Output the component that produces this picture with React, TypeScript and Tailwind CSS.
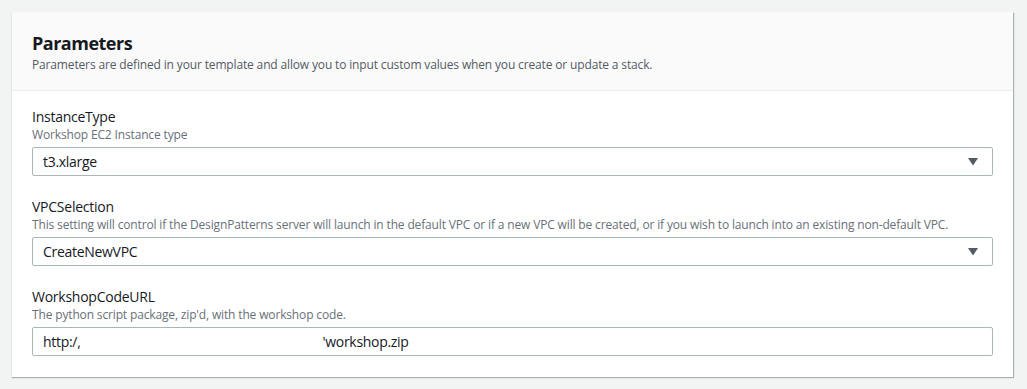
import React from "react";

interface Param {
  name: string;
  description: string;
  value: string;
  kind: "select" | "text";
}

const params: Param[] = [
  { name: "InstanceType", description: "Workshop EC2 Instance type", value: "t3.xlarge", kind: "select" },
  {
    name: "VPCSelection",
    description:
      "This setting will control if the DesignPatterns server will launch in the default VPC or if a new VPC will be created, or if you wish to launch into an existing non-default VPC.",
    value: "CreateNewVPC",
    kind: "select",
  },
  { name: "WorkshopCodeURL", description: "The python script package, zip'd, with the workshop code.", value: "", kind: "text" },
];

const Caret = () => (
  <svg width="10" height="8" viewBox="0 0 10 8" className="text-[#545b64]">
    <path d="M0 0h10L5 7.5z" fill="currentColor" />
  </svg>
);

const Field: React.FC<{ param: Param }> = ({ param }) => (
  <div className="flex flex-col">
    <label className="text-[14px] leading-[20px] tracking-[-0.25px] text-[#16191f]">{param.name}</label>
    <p className="text-[12px] leading-[16px] tracking-[-0.15px] text-[#687078]">{param.description}</p>
    <div className="mt-[4px] h-[29px] border border-[#aab7b8] rounded-[2px] bg-white flex items-center pl-[10px] pr-[14px] text-[14px] tracking-[-0.3px] text-[#16191f]">
      {param.kind === "select" ? (
        <>
          <span className="flex-1">{param.value}</span>
          <Caret />
        </>
      ) : (
        <>
          <span>http:/,</span>
          <span className="inline-block w-[242px]" />
          <span>'workshop.zip</span>
        </>
      )}
    </div>
  </div>
);

export default function App() {
  return (
    <div className="w-[1027px] h-[389px] bg-[#f2f3f3] pt-[12px] pl-[11px] font-['Open_Sans',sans-serif]">
      <section className="w-[1002px] bg-white border-l border-[#e4e7e7] shadow-[1px_1px_1px_0_rgba(0,28,36,0.3)]">
        <header className="bg-[#fafafa] border-b border-[#eaeded] px-[20px] pt-[18px] pb-[16px]">
          <h2 className="text-[18px] leading-[26px] font-bold tracking-[-0.5px] text-[#16191f]">Parameters</h2>
          <p className="text-[12px] leading-[18px] tracking-[-0.15px] text-[#545b64]">
            Parameters are defined in your template and allow you to input custom values when you create or update a stack.
          </p>
        </header>
        <div className="px-[20px] pt-[16px] pb-[21px] flex flex-col gap-[21px]">
          {params.map((p) => (
            <Field key={p.name} param={p} />
          ))}
        </div>
      </section>
    </div>
  );
}
